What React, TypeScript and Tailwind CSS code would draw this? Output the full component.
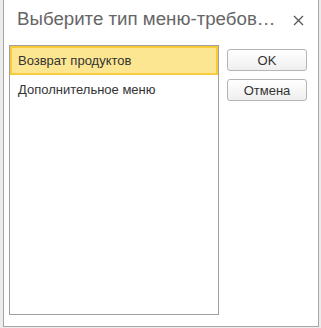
import React from "react";

const items = ["Возврат продуктов", "Дополнительное меню"];

const Button = ({ children }: { children: React.ReactNode }) => (
  <button className="w-[80px] h-[22px] rounded-[3px] border border-[#b4b4b4] bg-gradient-to-b from-white to-[#efefef] text-[13px] text-[#333] leading-none">
    {children}
  </button>
);

export default function App() {
  return (
    <div className="w-[321px] h-[328px] bg-[#ececec] pl-[3px] pr-[2px] pb-[1px] font-['Liberation_Sans',Arial,sans-serif]">
      <div className="h-[327px] bg-white border border-t-0 border-[#a6a6a6] flex flex-col">
        <div className="h-[45px] flex items-start pt-[8px] pl-[13px] pr-[14px]">
          <div className="flex-1 text-[18.7px] leading-[22px] text-[#666] whitespace-nowrap">
            Выберите тип меню-требов…
          </div>
          <svg width="11" height="11" viewBox="0 0 11 11" className="mt-[7px]">
            <path d="M1 1L10 10M10 1L1 10" stroke="#555" strokeWidth="1.3" />
          </svg>
        </div>
        <div className="flex pl-[5px]">
          <div className="w-[210px] h-[270px] border border-[#a0a0a0]">
            {items.map((item, i) => (
              <div
                key={item}
                className={`h-[29px] flex items-center pl-[6px] text-[13px] text-[#333] border-2 ${
                  i === 0 ? "bg-[#fde691] border-[#f7cb3c]" : "border-transparent"
                }`}
              >
                {item}
              </div>
            ))}
          </div>
          <div className="flex flex-col gap-[8px] ml-[8px] pt-[4px]">
            <Button>OK</Button>
            <Button>Отмена</Button>
          </div>
        </div>
      </div>
    </div>
  );
}
